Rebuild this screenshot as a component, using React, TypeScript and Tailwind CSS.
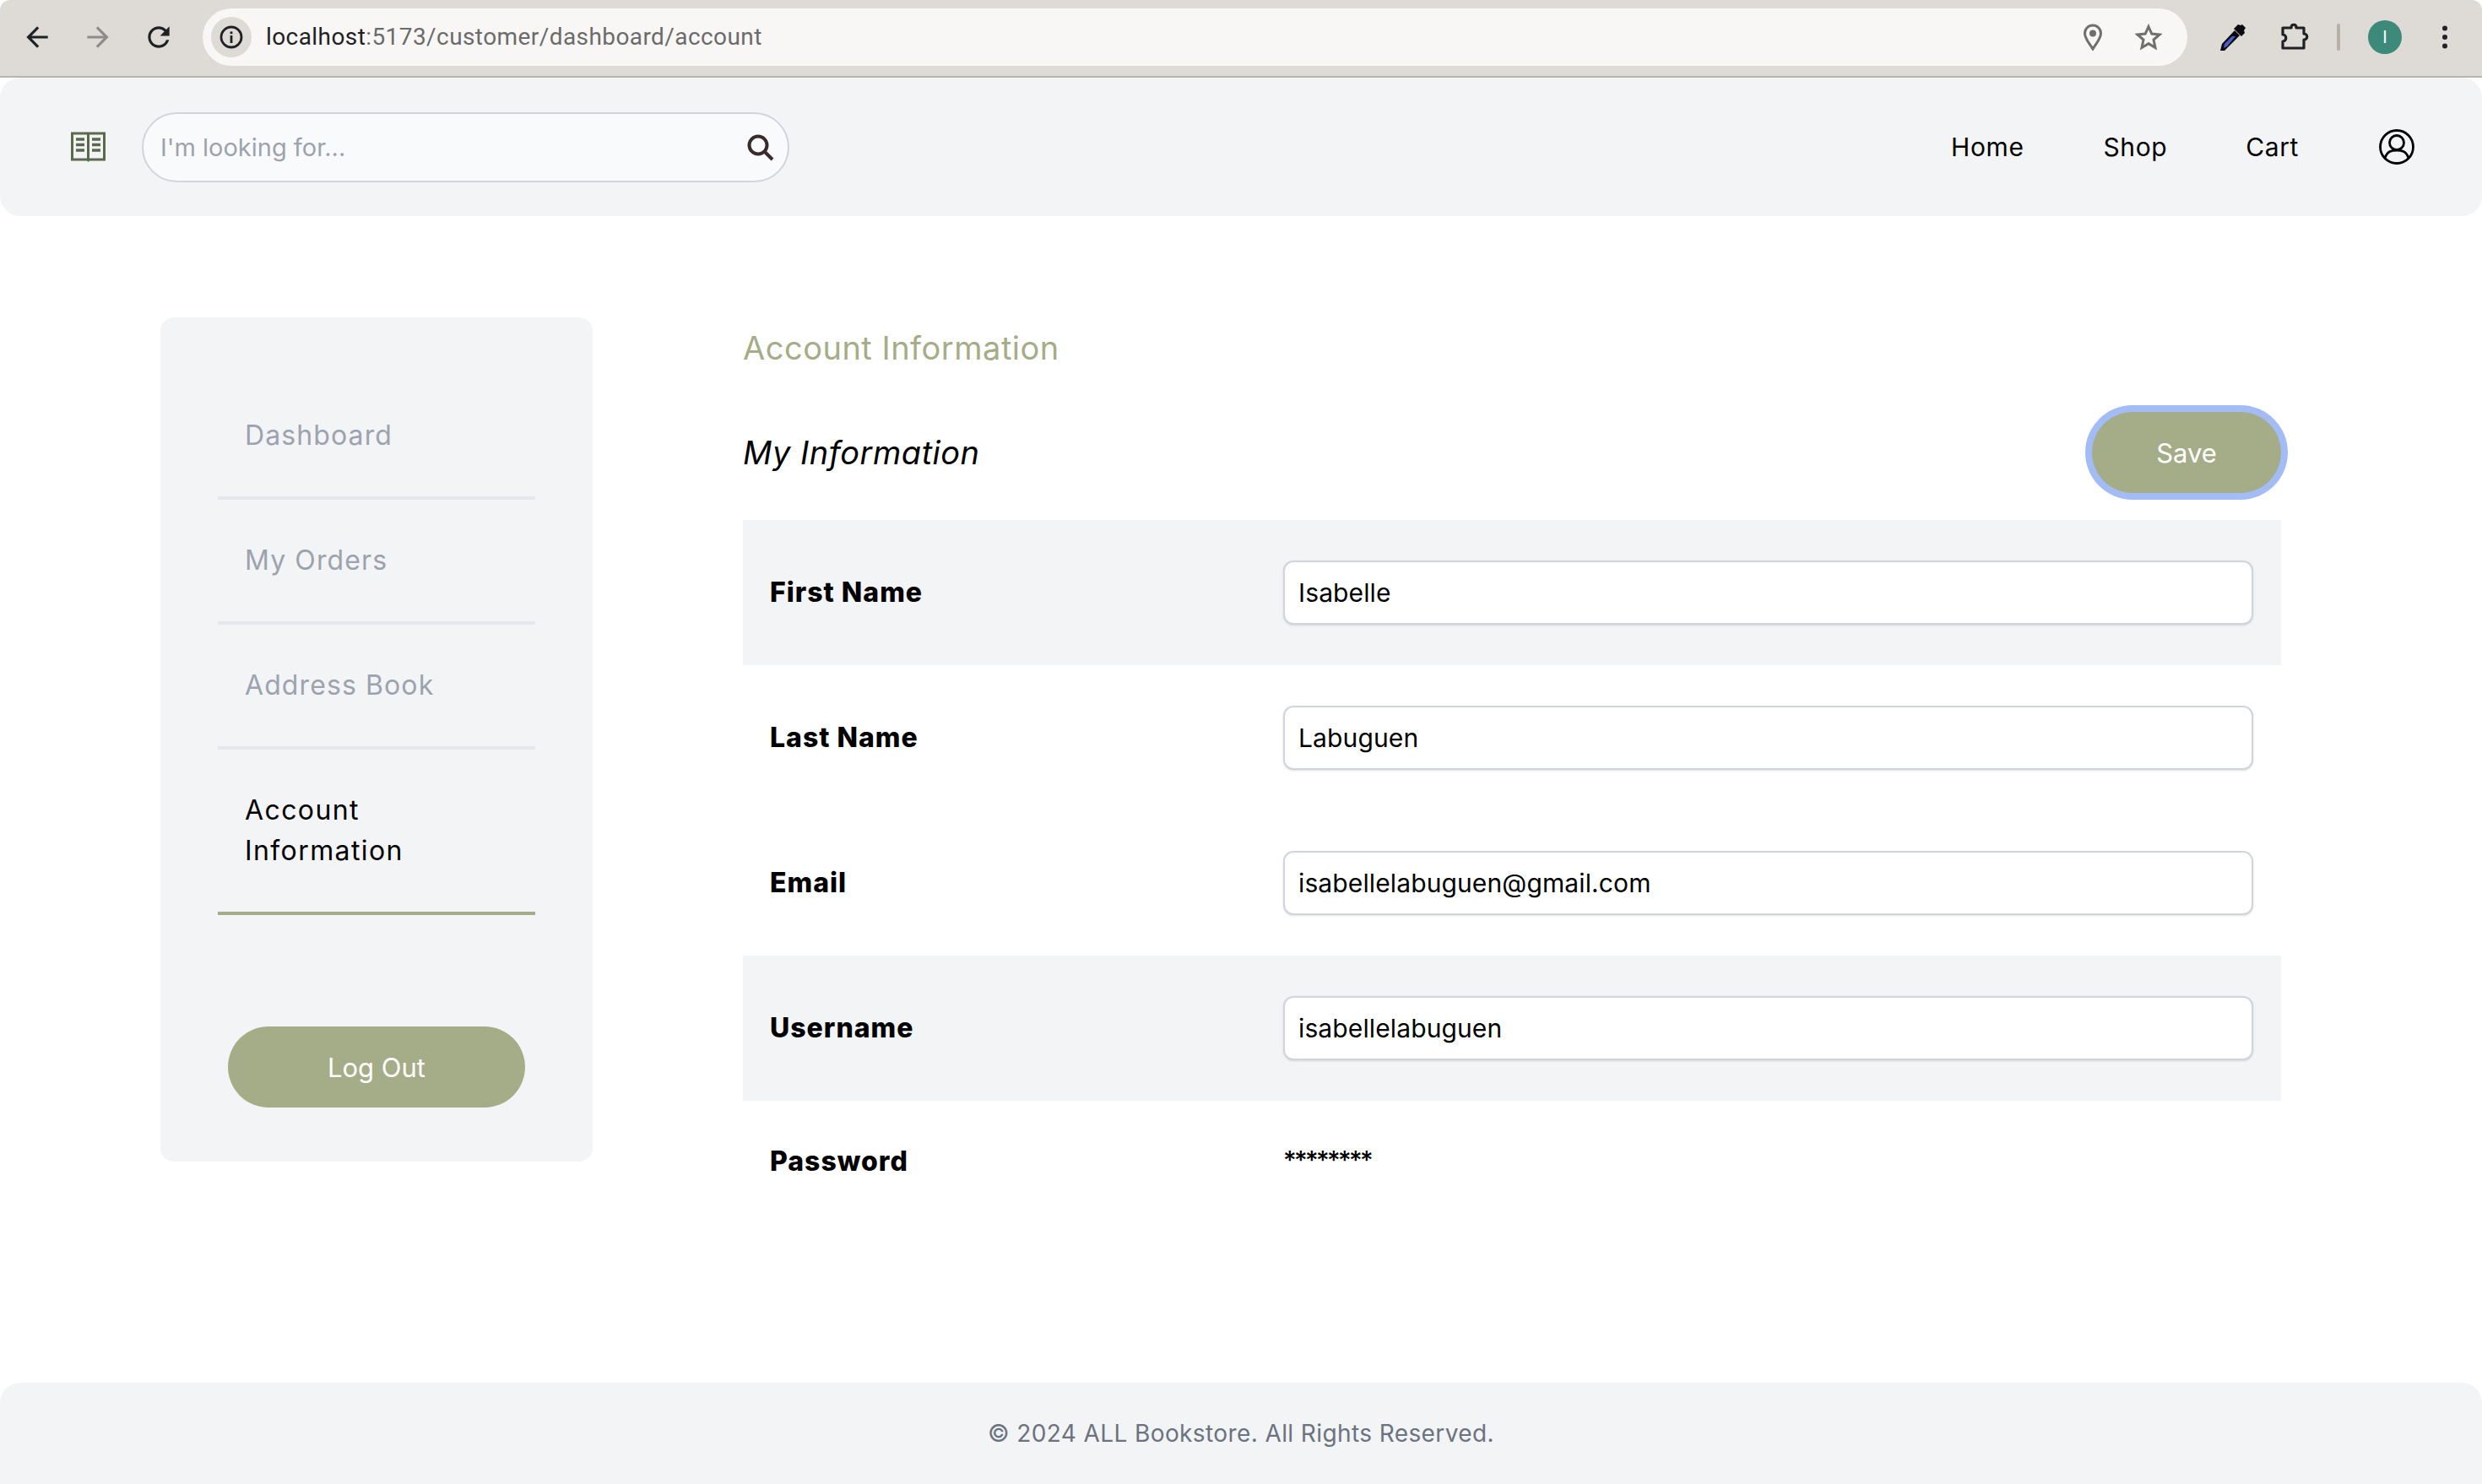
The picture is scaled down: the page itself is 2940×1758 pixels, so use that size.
const fields = [
  { label: "First Name", value: "Isabelle", shaded: true },
  { label: "Last Name", value: "Labuguen", shaded: false },
  { label: "Email", value: "isabellelabuguen@gmail.com", shaded: false },
  { label: "Username", value: "isabellelabuguen", shaded: true },
];

const sideLinks = ["Dashboard", "My Orders", "Address Book"];

function BrowserBar() {
  return (
    <div className="flex h-[92px] items-center border-b-2 border-[#b8b4ae] bg-[#dedbd6] rounded-t-[12px] pb-[2px] font-['Roboto',sans-serif]">
      <svg viewBox="0 0 24 24" className="ml-[25px] h-[38px] w-[38px] fill-[#1f2124]">
        <path d="M20 11H7.83l5.59-5.59L12 4l-8 8 8 8 1.41-1.41L7.83 13H20v-2z" />
      </svg>
      <svg viewBox="0 0 24 24" className="ml-[34px] h-[38px] w-[38px] fill-[#8d8c8a]">
        <path d="M4 11h12.17l-5.59-5.59L12 4l8 8-8 8-1.41-1.41L16.17 13H4v-2z" />
      </svg>
      <svg viewBox="0 0 24 24" className="ml-[34px] h-[38px] w-[38px] fill-[#1f2124]">
        <path d="M17.65 6.35C16.2 4.9 14.21 4 12 4c-4.42 0-7.99 3.58-7.99 8s3.57 8 7.99 8c3.73 0 6.84-2.55 7.73-6h-2.08c-.82 2.33-3.04 4-5.65 4-3.31 0-6-2.69-6-6s2.69-6 6-6c1.66 0 3.14.69 4.22 1.78L13 11h7V4l-2.35 2.35z" />
      </svg>
      <div className="ml-[33px] flex h-[68px] w-[2351px] items-center rounded-full bg-[#f8f7f5] pl-[10px]">
        <div className="flex h-[48px] w-[48px] items-center justify-center rounded-full bg-[#dedbd6]">
          <svg viewBox="0 0 28 28" className="h-[28px] w-[28px]">
            <circle cx="14" cy="14" r="12" fill="none" stroke="#1f2124" strokeWidth="2.8" />
            <rect x="12.6" y="12" width="2.8" height="9" fill="#1f2124" />
            <rect x="12.6" y="7.4" width="2.8" height="2.8" fill="#1f2124" />
          </svg>
        </div>
        <div className="ml-[17px] text-[28px] tracking-[0.42px] text-[#6b6b6b]">
          <span className="text-[#1f2124]">localhost</span>:5173/customer/dashboard/account
        </div>
        <svg viewBox="0 0 24 32" className="ml-auto h-[32px] w-[24px]">
          <path d="M12 30 C8 23 2.5 18 2.5 11.5 A9.5 9.5 0 0 1 21.5 11.5 C21.5 18 16 23 12 30Z" fill="none" stroke="#6f6f6f" strokeWidth="3" />
          <circle cx="12" cy="11.5" r="4" fill="#6f6f6f" />
        </svg>
        <svg viewBox="0 0 32 32" className="ml-[38px] mr-[30px] h-[32px] w-[32px]">
          <path d="M16 3.5 L19.8 12 L29 13 L22 19 L24 28.5 L16 23.6 L8 28.5 L10 19 L3 13 L12.2 12Z" fill="none" stroke="#6f6f6f" strokeWidth="3" strokeLinejoin="miter" />
        </svg>
      </div>
      <svg viewBox="0 0 32 32" className="ml-[38px] h-[32px] w-[32px]">
        <path d="M1 32 L3 24 L18 8 L24 14 L8 30 L6 32Z" fill="#0b0b0f" />
        <path d="M5 29 L6 24 L15 15 L19 15 L9 27Z" fill="#4a60c8" />
        <path d="M17 6 L22 1 L25 2 L27 1 L31 5 L29 8 L30 11 L26 15Z" fill="#0b0b0f" />
      </svg>
      <svg viewBox="0 0 34 34" className="ml-[40px] h-[34px] w-[34px]">
        <path d="M3 6 H13 C13 1 19 1 19 6 H28 V13 C33 13 33 20 28 20 V30 H3 V22 C8 22 8 14 3 14Z" fill="none" stroke="#1f2124" strokeWidth="3.2" strokeLinejoin="round" />
      </svg>
      <div className="ml-[33px] h-[32px] w-[4px] rounded-full bg-[#b8b0a8]" />
      <div className="ml-[33px] flex h-[40px] w-[40px] items-center justify-center rounded-full bg-[#3d8a7b] text-[20px] text-white">
        I
      </div>
      <svg viewBox="0 0 8 28" className="ml-[47px] h-[28px] w-[8px] fill-[#1f2124]">
        <circle cx="4" cy="3.5" r="3" />
        <circle cx="4" cy="14" r="3" />
        <circle cx="4" cy="24.5" r="3" />
      </svg>
    </div>
  );
}

function Header() {
  return (
    <header className="flex h-[164px] items-center rounded-[24px] bg-[#f3f4f6] pl-[84px] pr-[80px]">
      <svg viewBox="0 0 41 36" className="h-[36px] w-[41px]">
        <path d="M1.5 2 H20.5 V33 H1.5Z M20.5 2 H39.5 V33 H20.5Z" fill="none" stroke="#5a6b4c" strokeWidth="3" />
        <path d="M18 33 L20.5 36 L23 33Z" fill="#5a6b4c" />
        <path d="M6 9h10M6 15.5h10M6 22h10M25 9h10M25 15.5h10M25 22h10" stroke="#5a6b4c" strokeWidth="3.4" />
      </svg>
      <div className="relative ml-[43px] w-[767px]">
        <input
          placeholder="I'm looking for..."
          className="h-[83px] w-full rounded-full border-2 border-[#d1d5db] bg-[#f9fafb] pl-[20px] pr-[70px] text-[29px] placeholder:text-[#9ca3af]"
        />
        <svg viewBox="0 0 32 32" className="absolute right-[18px] top-[26px] h-[32px] w-[32px]">
          <circle cx="13" cy="13" r="10.5" fill="none" stroke="#3a2a2a" strokeWidth="4" />
          <path d="M20.5 20.5 L30 30" stroke="#3a2a2a" strokeWidth="4" />
        </svg>
      </div>
      <nav className="ml-auto flex items-center text-[30px] tracking-[0.6px] text-black">
        <span>Home</span>
        <span className="ml-[94px]">Shop</span>
        <span className="ml-[93px]">Cart</span>
        <svg viewBox="0 0 42 42" className="ml-[95px] h-[42px] w-[42px]">
          <circle cx="21" cy="21" r="19.5" fill="none" stroke="#000" strokeWidth="2.8" />
          <circle cx="21" cy="16" r="8.5" fill="none" stroke="#000" strokeWidth="2.8" />
          <path d="M7 34 C10 26 15 25 21 25 C27 25 32 26 35 34" fill="none" stroke="#000" strokeWidth="2.8" />
        </svg>
      </nav>
    </header>
  );
}

function Sidebar() {
  return (
    <aside className="h-[1000px] w-[512px] shrink-0 rounded-[16px] bg-[#f3f4f6] pt-[68px]">
      <ul className="mx-[68px] w-[376px]">
        {sideLinks.map((link) => (
          <li key={link} className="border-b-4 border-[#e5e7eb] px-[32px] py-[48px] text-[32px] leading-[48px] tracking-[1.1px] text-[#9ca3af]">
            {link}
          </li>
        ))}
        <li className="border-b-4 border-[#a5ad88] px-[32px] py-[48px] text-[32px] leading-[48px] tracking-[1.4px] text-black">
          Account
          <br />
          Information
        </li>
      </ul>
      <button className="ml-[80px] mt-[132px] h-[96px] w-[352px] rounded-full bg-[#a5ad88] pt-[2px] text-[31px] text-white">
        Log Out
      </button>
    </aside>
  );
}

function AccountForm() {
  return (
    <section className="ml-[178px] w-[1822px]">
      <h1 className="mt-[8px] text-[38px] leading-[56px] tracking-[0.5px] text-[#a5ad88]">Account Information</h1>
      <div className="mt-[48px] flex items-center justify-between">
        <h2 className="text-[38px] italic tracking-[0.5px] text-black">My Information</h2>
        <button className="h-[96px] w-[224px] rounded-full bg-[#a5ad88] pt-[2px] text-[31px] text-white ring-8 ring-[#a4bcf5]">
          Save
        </button>
      </div>
      <div className="mt-[32px]">
        {fields.map((field) => (
          <div key={field.label} className={`flex h-[172px] items-center px-[32px] ${field.shaded ? "bg-[#f3f4f6]" : ""}`}>
            <label className="w-[608px] text-[32px] font-extrabold tracking-[1px] text-black">{field.label}</label>
            <input
              defaultValue={field.value}
              className="mr-[1px] h-[76px] flex-1 rounded-[12px] border-2 border-[#d1d5db] bg-white px-[16px] text-[30px] tracking-[0.12px] text-black shadow-sm"
            />
          </div>
        ))}
        <div className="flex px-[32px] pt-[48px]">
          <div className="w-[608px] text-[32px] leading-[48px] font-extrabold tracking-[1px] text-black">Password</div>
          <div className="pt-[2px] text-[30px] leading-[40px] font-medium tracking-[-2.6px] text-black">********</div>
        </div>
      </div>
    </section>
  );
}

export default function App() {
  return (
    <div className="flex h-[1758px] w-[2940px] flex-col overflow-hidden bg-white font-['Inter',sans-serif]">
      <BrowserBar />
      <Header />
      <main className="flex flex-1 pl-[190px] pt-[120px]">
        <Sidebar />
        <AccountForm />
      </main>
      <footer className="flex h-[120px] items-center justify-center rounded-t-[24px] bg-[#f3f4f6] text-[28px] tracking-[0.4px] text-[#6b7280]">
        © 2024 ALL Bookstore. All Rights Reserved.
      </footer>
    </div>
  );
}
